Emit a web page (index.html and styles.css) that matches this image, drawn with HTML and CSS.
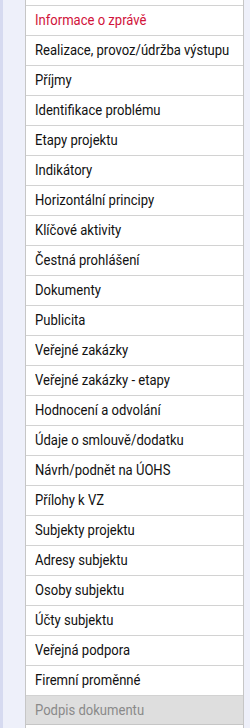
FILE: index.html
```html
<!DOCTYPE html>
<html>
   <head>
      <meta charset="UTF-8">
      <meta name="viewport" content="width=device-width, initial-scale=1.0"/>
      <title>Navigace</title>
      <link rel="stylesheet" href="styles.css">
   </head>
   <body>
      <div class="page">
         <div class="side-strip"></div>
         <ul class="nav-list">
            <li class="nav-item active"><span>Informace o zprávě</span></li>
            <li class="nav-item"><span>Realizace, provoz/údržba výstupu</span></li>
            <li class="nav-item"><span>Příjmy</span></li>
            <li class="nav-item"><span>Identifikace problému</span></li>
            <li class="nav-item"><span>Etapy projektu</span></li>
            <li class="nav-item"><span>Indikátory</span></li>
            <li class="nav-item"><span>Horizontální principy</span></li>
            <li class="nav-item"><span>Klíčové aktivity</span></li>
            <li class="nav-item"><span>Čestná prohlášení</span></li>
            <li class="nav-item"><span>Dokumenty</span></li>
            <li class="nav-item"><span>Publicita</span></li>
            <li class="nav-item"><span>Veřejné zakázky</span></li>
            <li class="nav-item"><span>Veřejné zakázky - etapy</span></li>
            <li class="nav-item"><span>Hodnocení a odvolání</span></li>
            <li class="nav-item"><span>Údaje o smlouvě/dodatku</span></li>
            <li class="nav-item"><span>Návrh/podnět na ÚOHS</span></li>
            <li class="nav-item"><span>Přílohy k VZ</span></li>
            <li class="nav-item"><span>Subjekty projektu</span></li>
            <li class="nav-item"><span>Adresy subjektu</span></li>
            <li class="nav-item"><span>Osoby subjektu</span></li>
            <li class="nav-item"><span>Účty subjektu</span></li>
            <li class="nav-item"><span>Veřejná podpora</span></li>
            <li class="nav-item"><span>Firemní proměnné</span></li>
            <li class="nav-item disabled"><span>Podpis dokumentu</span></li>
         </ul>
         <div class="side-right"></div>
      </div>
   </body>
</html>
```

FILE: styles.css
```css
*
{
   box-sizing: border-box;
}

html,
body
{
   margin: 0;
   padding: 0;
   height: 100%;
}

body
{
   background: #eef0fa;
   font-family: "Roboto", "Liberation Sans", sans-serif;
   font-size: 15px;
}

.page
{
   display: flex;
   height: 728px;
}

.side-strip
{
   flex: 0 0 25px;
   border-left: 3px solid #d6daf0;
   background: #eef0fa;
}

.side-right
{
   flex: 0 0 6px;
   background: #eef0fa;
}

.nav-list
{
   flex: 1 1 auto;
   min-width: 0;
   overflow: hidden;
   list-style: none;
   margin: 0;
   padding: 5px 0 0 0;
   background: #ffffff;
   border-left: 1px solid #c6c6c6;
   border-right: 1px solid #c6c6c6;
}

.nav-item
{
   height: 30px;
   line-height: 29px;
   padding-left: 9px;
   border-top: 1px solid #d2d2d2;
   color: #111111;
   white-space: nowrap;
}

/* condensed look of the original face */
.nav-item span
{
   display: inline-block;
   transform: scaleX(0.87);
   transform-origin: left center;
}

.nav-item.active
{
   color: #d1133a;
}

.nav-item.disabled
{
   background: #dedede;
   color: #8a8a8a;
   border-bottom: 1px solid #c6c6c6;
}
```
